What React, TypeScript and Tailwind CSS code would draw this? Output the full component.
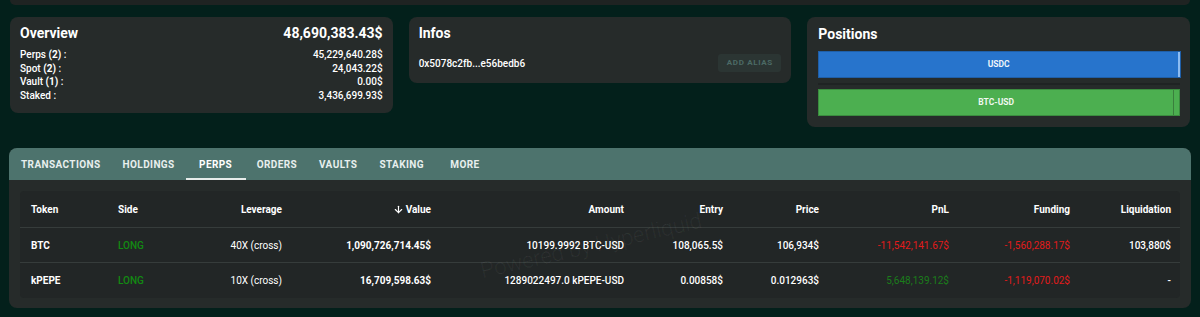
import { ArrowDown } from "lucide-react";

const tabs = ["TRANSACTIONS", "HOLDINGS", "PERPS", "ORDERS", "VAULTS", "STAKING", "MORE"];

const cols = "grid grid-cols-[87px_73px_113px_149px_193px_99px_96px_130px_121px_101px]";

const rows = [
  {
    token: "BTC",
    side: "LONG",
    leverage: "40X (cross)",
    value: "1,090,726,714.45$",
    amount: "10199.9992 BTC-USD",
    entry: "108,065.5$",
    price: "106,934$",
    pnl: "-11,542,141.67$",
    pnlUp: false,
    funding: "-1,560,288.17$",
    liq: "103,880$",
  },
  {
    token: "kPEPE",
    side: "LONG",
    leverage: "10X (cross)",
    value: "16,709,598.63$",
    amount: "1289022497.0 kPEPE-USD",
    entry: "0.00858$",
    price: "0.012963$",
    pnl: "5,648,139.12$",
    pnlUp: true,
    funding: "-1,119,070.02$",
    liq: "-",
  },
];

function Overview() {
  const lines = [
    { label: "Perps", count: "(2)", value: "45,229,640.28$" },
    { label: "Spot", count: "(2)", value: "24,043.22$" },
    { label: "Vault", count: "(1)", value: "0.00$" },
    { label: "Staked", count: "", value: "3,436,699.93$" },
  ];
  return (
    <div className="rounded-lg bg-[#262b2a] px-[10px] pt-[6px] pb-[11px]">
      <div className="flex h-[20px] items-center justify-between text-[14px] font-bold">
        <span>Overview</span>
        <span>48,690,383.43$</span>
      </div>
      <div className="mt-[5px] text-[10px] font-medium">
        {lines.map((l) => (
          <div key={l.label} className="flex h-[13.5px] items-center justify-between">
            <span>
              {l.label} {l.count && <b className="font-bold">{l.count}</b>} :
            </span>
            <span>{l.value}</span>
          </div>
        ))}
      </div>
    </div>
  );
}

function Infos() {
  return (
    <div className="rounded-lg bg-[#262b2a] px-[10px] pt-[6px] pb-[11px]">
      <div className="flex h-[20px] items-center text-[14px] font-bold">Infos</div>
      <div className="mt-[11px] flex h-[18px] items-center justify-between">
        <span className="text-[10px] font-medium">0x5078c2fb...e56bedb6</span>
        <button className="h-[18px] w-[63px] rounded-[3px] bg-[#2b3533] text-[8px] font-bold tracking-[0.08em] text-[#4b6a65]">
          ADD ALIAS
        </button>
      </div>
    </div>
  );
}

function Positions() {
  return (
    <div className="rounded-lg bg-[#262b2a] pl-[11px] pr-[9px] pt-[7px] pb-[11px]">
      <div className="flex h-[20px] items-center text-[14px] font-bold">Positions</div>
      <div className="mt-[7px] flex h-[27px] border border-[#1f5fa8]">
        <div className="flex flex-1 items-center justify-center bg-[#2774cc] text-[8.5px] font-bold text-[#eef4fb]">
          USDC
        </div>
        <div className="w-[2px] bg-[#8cbcf2]" />
      </div>
      <div className="mt-[5px] mr-[1px] h-[2px] bg-[#1f2323]" />
      <div className="mt-[4px] mr-[1px] flex h-[27px] border border-[#3b8c3f]">
        <div className="flex flex-1 items-center justify-center bg-[#4caf50] text-[8.5px] font-bold text-[#f0f8f0]">
          BTC-USD
        </div>
        <div className="w-[1px] bg-[#3a7f3d]" />
        <div className="w-[5px] bg-[#4caf50]" />
      </div>
    </div>
  );
}

export default function App() {
  return (
    <div className="min-h-screen bg-[#03201b] font-['Roboto',sans-serif] text-white">
      <div className="mx-[10px] h-[5px] rounded-b-lg bg-[#1f2322]" />

      <div className="mx-[10px] mt-[12px] grid grid-cols-3 items-start gap-4">
        <Overview />
        <Infos />
        <Positions />
      </div>

      <div className="mx-[9px] mt-[21px] overflow-hidden rounded-lg bg-[#262b2a]">
        {/* Tabs */}
        <div className="flex h-[32px] bg-[#4d736d] pl-px">
          {tabs.map((t) => (
            <div
              key={t}
              className={`relative flex min-w-[60px] items-center justify-center px-[11px] text-[10px] font-bold tracking-[0.04em] ${
                t === "PERPS" ? "text-white" : "text-[#e8efee]"
              }`}
            >
              {t}
              {t === "PERPS" && <div className="absolute inset-x-0 bottom-0 h-[2px] bg-[#e6ecea]" />}
            </div>
          ))}
        </div>

        {/* Table */}
        <div className="px-[11px] pt-[11px] pb-[10px]">
          <div className="relative overflow-hidden rounded-sm bg-[#222626] text-[10px]">
            <div className={`${cols} h-[37px] items-center border-b border-[#363c3b] font-bold`}>
              <div className="px-[11px]">Token</div>
              <div className="px-[11px]">Side</div>
              <div className="px-[11px] text-right">Leverage</div>
              <div className="flex items-center justify-end gap-[2px] px-[11px]">
                <ArrowDown size={11} strokeWidth={2.5} />
                Value
              </div>
              <div className="px-[11px] text-right">Amount</div>
              <div className="px-[11px] text-right">Entry</div>
              <div className="px-[11px] text-right">Price</div>
              <div className="px-[11px] text-right">PnL</div>
              <div className="px-[11px] text-right">Funding</div>
              <div className="px-[11px] text-right">Liquidation</div>
            </div>
            {rows.map((r, i) => (
              <div
                key={r.token}
                className={`${cols} h-[35px] items-center font-medium ${
                  i === 0 ? "border-b border-[#363c3b]" : ""
                }`}
              >
                <div className="px-[11px] font-bold">{r.token}</div>
                <div className="px-[11px] text-[#128a12]">{r.side}</div>
                <div className="px-[11px] text-right font-normal">{r.leverage}</div>
                <div className="px-[11px] text-right font-bold">{r.value}</div>
                <div className="px-[11px] text-right">{r.amount}</div>
                <div className="px-[11px] text-right">{r.entry}</div>
                <div className="px-[11px] text-right">{r.price}</div>
                <div className={`px-[11px] text-right font-normal ${r.pnlUp ? "text-[#1b7d1b]" : "text-[#e11b1b]"}`}>
                  {r.pnl}
                </div>
                <div className="px-[11px] text-right font-normal text-[#e11b1b]">{r.funding}</div>
                <div className="px-[11px] text-right">{r.liq}</div>
              </div>
            ))}

            {/* Watermark */}
            <div className="pointer-events-none absolute left-[458px] top-[38px] -rotate-[13deg] whitespace-nowrap text-[22px] font-light text-white/[0.06]">
              Powered by Hyperliquid
            </div>
          </div>
        </div>
      </div>
    </div>
  );
}
